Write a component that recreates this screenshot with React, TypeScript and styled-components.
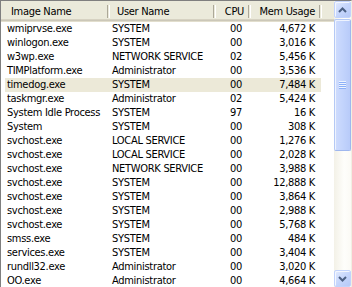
import styled, { createGlobalStyle } from 'styled-components';

/* Data */
interface IProcess {
    image: string;
    user: string;
    cpu: string;
    mem: string;
    selected?: boolean;
}

const PROCESSES: IProcess[] = [
    { image: 'wmiprvse.exe', user: 'SYSTEM', cpu: '00', mem: '4,672 K' },
    { image: 'winlogon.exe', user: 'SYSTEM', cpu: '00', mem: '3,016 K' },
    { image: 'w3wp.exe', user: 'NETWORK SERVICE', cpu: '02', mem: '5,456 K' },
    { image: 'TIMPlatform.exe', user: 'Administrator', cpu: '00', mem: '3,536 K' },
    { image: 'timedog.exe', user: 'SYSTEM', cpu: '00', mem: '7,484 K', selected: true },
    { image: 'taskmgr.exe', user: 'Administrator', cpu: '02', mem: '5,424 K' },
    { image: 'System Idle Process', user: 'SYSTEM', cpu: '97', mem: '16 K' },
    { image: 'System', user: 'SYSTEM', cpu: '00', mem: '308 K' },
    { image: 'svchost.exe', user: 'LOCAL SERVICE', cpu: '00', mem: '1,276 K' },
    { image: 'svchost.exe', user: 'LOCAL SERVICE', cpu: '00', mem: '2,028 K' },
    { image: 'svchost.exe', user: 'NETWORK SERVICE', cpu: '00', mem: '3,988 K' },
    { image: 'svchost.exe', user: 'SYSTEM', cpu: '00', mem: '12,888 K' },
    { image: 'svchost.exe', user: 'SYSTEM', cpu: '00', mem: '3,864 K' },
    { image: 'svchost.exe', user: 'SYSTEM', cpu: '00', mem: '2,988 K' },
    { image: 'svchost.exe', user: 'SYSTEM', cpu: '00', mem: '5,768 K' },
    { image: 'smss.exe', user: 'SYSTEM', cpu: '00', mem: '484 K' },
    { image: 'services.exe', user: 'SYSTEM', cpu: '00', mem: '3,404 K' },
    { image: 'rundll32.exe', user: 'Administrator', cpu: '00', mem: '3,020 K' },
    { image: 'OO.exe', user: 'Administrator', cpu: '00', mem: '4,664 K' },
];

const GlobalStyle = createGlobalStyle`
    html, body {
        margin: 0;
        padding: 0;
        background: #ffffff;
        overflow: hidden;
    }
    body {
        font-family: "DejaVu Sans Condensed", "DejaVu Sans", sans-serif;
        font-size: 11px;
        letter-spacing: -0.3px;
        color: #000000;
    }
`;

const Chevron = ({ up }: { up?: boolean }) => (
    <svg width="9" height="6" viewBox="0 0 9 6">
        <polyline
            points={up ? '1,5 4.5,1.5 8,5' : '1,1 4.5,4.5 8,1'}
            fill="none"
            stroke="#4d6185"
            strokeWidth="2"
        />
    </svg>
);

const App = () => {
    return (<>
        <GlobalStyle />
        <Frame>
            <ListArea>
                <Header>
                    <HeaderCell pad="0 0 0 10px">Image Name</HeaderCell>
                    <HeaderCell pad="0 0 0 7px">User Name</HeaderCell>
                    <HeaderCell pad="0 7px 0 0" right>CPU</HeaderCell>
                    <HeaderCell pad="0 7px 0 0" right>Mem Usage</HeaderCell>
                    <HeaderFiller />
                </Header>
                <Rows>
                    {PROCESSES.map((p, i) => (
                        <Row key={i} selected={p.selected}>
                            <Cell pad="0 0 0 2px">{p.image}</Cell>
                            <Cell pad="0 0 0 3px">{p.user}</Cell>
                            <Cell pad="0 8px 0 0" right>{p.cpu}</Cell>
                            <Cell pad="0 6px 0 0" right>{p.mem}</Cell>
                        </Row>
                    ))}
                </Rows>
            </ListArea>
            <ScrollBar>
                <ArrowButton><Chevron up /></ArrowButton>
                <Track>
                    <Thumb>
                        <Grip>
                            <GripLine />
                            <GripLine />
                            <GripLine />
                            <GripLine />
                        </Grip>
                    </Thumb>
                </Track>
                <ArrowButton><Chevron /></ArrowButton>
            </ScrollBar>
        </Frame>
    </>);
};

const Frame = styled.div`
    box-sizing: border-box;
    width: 352px;
    height: 287px;
    display: flex;
    border-left: 1px solid #7f7f7f;
    border-top: 1px solid #7f7f7f;
    border-right: 1px solid #f1efe2;
    background: #ffffff;
    overflow: hidden;
`;

const ListArea = styled.div`
    flex: 1;
    display: flex;
    flex-direction: column;
    overflow: hidden;
`;

const Header = styled.div`
    display: grid;
    grid-template-columns: 109px 106px 35px 71px 1fr;
    height: 21px;
    flex-shrink: 0;
    background: linear-gradient(to bottom,
        #ebeadb 0, #ebeadb 18px,
        #d6d2c2 18px, #d6d2c2 19px,
        #cbc7b8 19px, #cbc7b8 20px,
        #e2decd 20px, #e2decd 21px);
`;

const HeaderCell = styled.div<{ pad: string, right?: boolean }>`
    position: relative;
    display: flex;
    align-items: center;
    justify-content: ${props => props.right ? 'flex-end' : 'flex-start'};
    height: 18px;
    padding: ${props => props.pad};
    padding-top: 1px;
    white-space: nowrap;

    &::after {
        content: '';
        position: absolute;
        right: 0;
        top: 4px;
        height: 13px;
        width: 1px;
        border-left: 1px solid #aca899;
        border-right: 1px solid #ffffff;
    }
`;

const HeaderFiller = styled.div``;

const Rows = styled.div`
    display: flex;
    flex-direction: column;
`;

const Row = styled.div<{ selected?: boolean }>`
    display: grid;
    grid-template-columns: 104px 106px 35px 71px;
    width: 316px;
    margin-left: 4px;
    height: 14px;
    line-height: 14px;
    flex-shrink: 0;
    background: ${props => props.selected ? '#ece9d8' : 'transparent'};
`;

const Cell = styled.div<{ pad: string, right?: boolean }>`
    padding: ${props => props.pad};
    text-align: ${props => props.right ? 'right' : 'left'};
    white-space: nowrap;
    overflow: hidden;
`;

const ScrollBar = styled.div`
    width: 17px;
    flex-shrink: 0;
    display: flex;
    flex-direction: column;
    background: linear-gradient(to right, #f3f1e7 0%, #fefefb 60%, #fbfaf5 100%);
`;

const ArrowButton = styled.div`
    box-sizing: border-box;
    width: 17px;
    height: 17px;
    flex-shrink: 0;
    display: flex;
    align-items: center;
    justify-content: center;
    border: 1px solid #c2d3fc;
    border-radius: 2px;
    background: linear-gradient(135deg, #e3ebfe 0%, #c6d6fc 50%, #b6c9f7 100%);
    box-shadow: inset 1px 1px 0 #f4f7fe;
`;

const Track = styled.div`
    flex: 1;
    padding-top: 1px;
`;

const Thumb = styled.div`
    box-sizing: border-box;
    width: 17px;
    height: 132px;
    display: flex;
    align-items: center;
    justify-content: center;
    border: 1px solid #b5c9f5;
    border-right-color: #9fb7ee;
    border-bottom-color: #9fb7ee;
    border-radius: 2px;
    background: linear-gradient(to right, #cfdcfd 0%, #c3d4fc 50%, #b8cbf9 100%);
    box-shadow: inset 1px 1px 0 #eef3fe;
`;

const Grip = styled.div`
    display: flex;
    flex-direction: column;
    gap: 0;
`;

const GripLine = styled.div`
    width: 7px;
    height: 1px;
    background: #eef4fe;
    border-bottom: 1px solid #8cb0f8;
`;

export default App
